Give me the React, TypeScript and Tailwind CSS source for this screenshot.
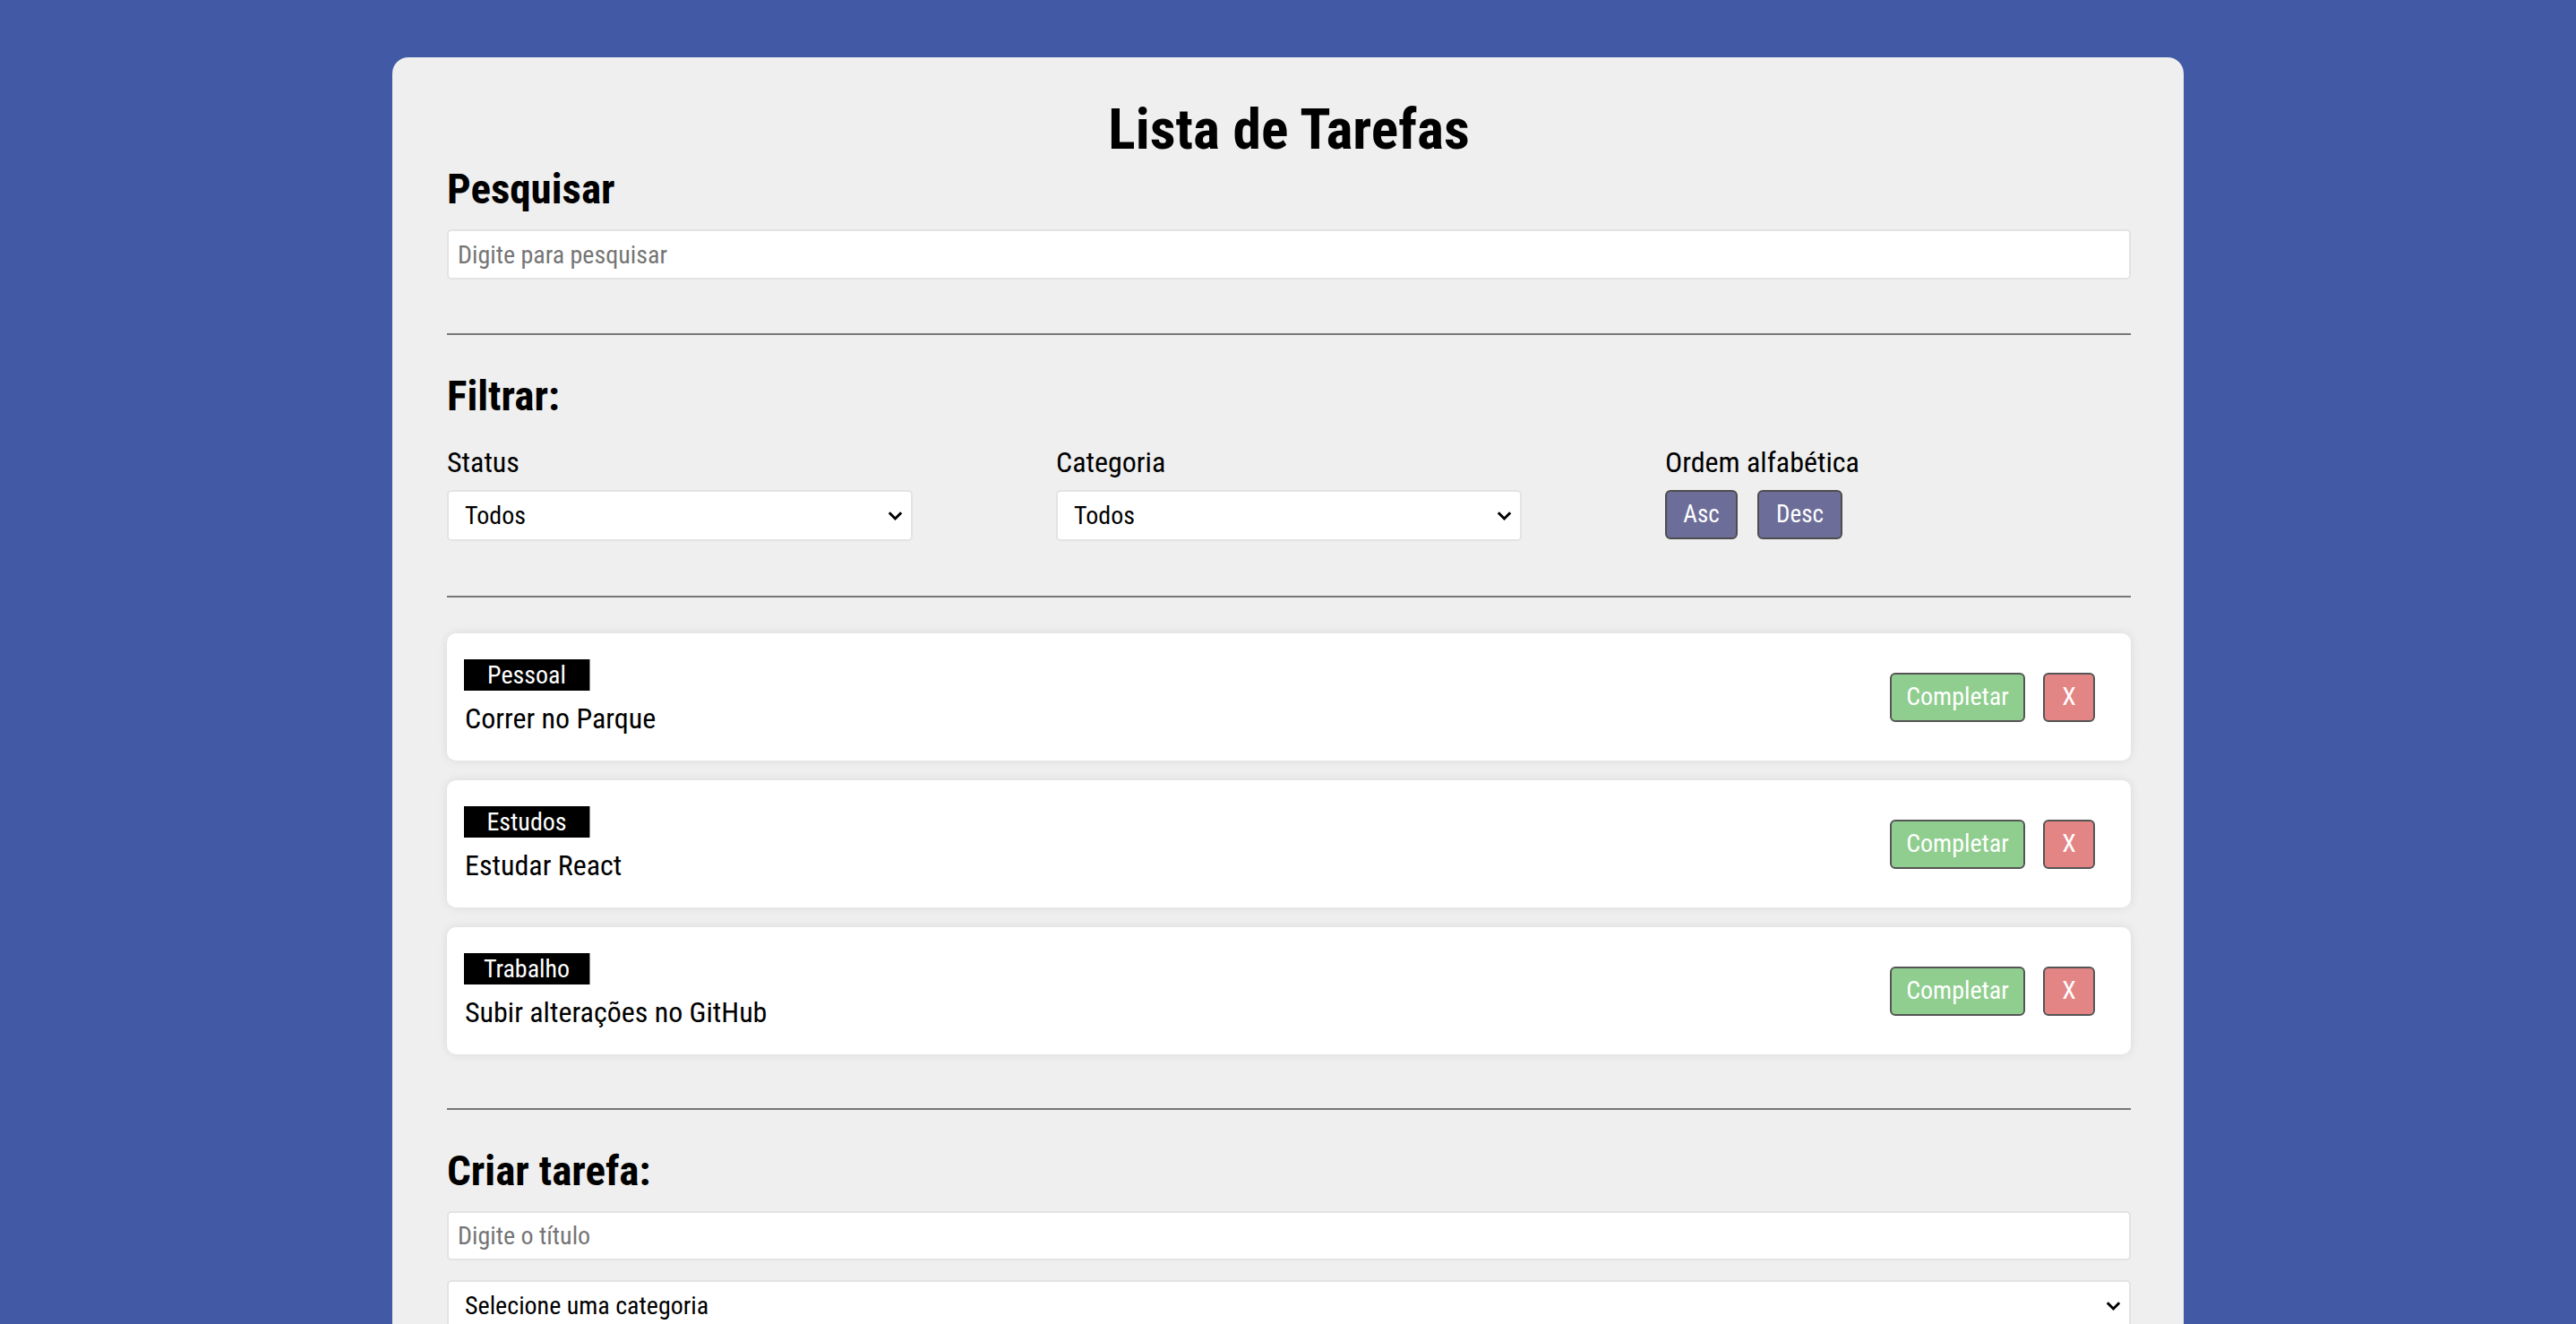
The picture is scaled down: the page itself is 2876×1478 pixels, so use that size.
import React from "react";

const tasks = [
  { cat: "Pessoal", title: "Correr no Parque" },
  { cat: "Estudos", title: "Estudar React" },
  { cat: "Trabalho", title: "Subir alterações no GitHub" },
];

function Chevron() {
  return (
    <svg
      className="pointer-events-none absolute right-[11px] top-1/2 -translate-y-1/2"
      width="17"
      height="11"
      viewBox="0 0 17 11"
      fill="none"
    >
      <path d="M1.8 1.8 L8.5 8.5 L15.2 1.8" stroke="#000" strokeWidth="3" />
    </svg>
  );
}

function Select({ value, className = "" }: { value: string; className?: string }) {
  return (
    <div className={"relative " + className}>
      <select
        defaultValue={value}
        className="h-full w-full appearance-none rounded-[5px] border-2 border-[#e3e3e3] bg-white pl-[18px] text-[28px] text-black outline-none"
      >
        <option>{value}</option>
      </select>
      <Chevron />
    </div>
  );
}

export default function App() {
  return (
    <div className="min-h-screen bg-[#4259a5] pt-[64px] pb-[60px] font-['Roboto_Condensed',Roboto,sans-serif] [font-stretch:condensed] text-black">
      <div className="mx-auto w-[2000px] rounded-[18px] bg-[#efefef] pl-[61px] pr-[59px] pt-[42px] pb-[60px]">
        <h1 className="text-center text-[63.5px] font-bold leading-[77px]">Lista de Tarefas</h1>
        <h2 className="text-[47px] font-bold leading-[56px]">Pesquisar</h2>
        <input
          type="text"
          placeholder="Digite para pesquisar"
          className="mt-[17px] block h-[56px] w-full rounded-[5px] border-2 border-[#e3e3e3] bg-white px-[10px] text-[28px] outline-none placeholder:text-[#757575]"
        />
        <div className="mt-[60px] h-[2px] bg-[#777777]" />

        <h2 className="mt-[40px] text-[47px] font-bold leading-[56px]">Filtrar:</h2>
        <div className="mt-[27px] grid grid-cols-3 gap-x-[160px]">
          <div className="flex flex-col">
            <span className="text-[32px] leading-[38px]">Status</span>
            <Select value="Todos" className="mt-[12px] h-[57px]" />
          </div>
          <div className="flex flex-col">
            <span className="text-[32px] leading-[38px]">Categoria</span>
            <Select value="Todos" className="mt-[12px] h-[57px]" />
          </div>
          <div className="flex flex-col">
            <span className="text-[32px] leading-[38px]">Ordem alfabética</span>
            <div className="mt-[12px] flex gap-[22px]">
              <button className="h-[55px] w-[81px] rounded-[6px] border-2 border-[#4d4d4d] bg-[#6c6e99] text-[27px] text-white">
                Asc
              </button>
              <button className="h-[55px] w-[95px] rounded-[6px] border-2 border-[#4d4d4d] bg-[#6c6e99] text-[27px] text-white">
                Desc
              </button>
            </div>
          </div>
        </div>
        <div className="mt-[61px] h-[2px] bg-[#777777]" />

        <div className="mt-[40px] flex flex-col gap-[22px]">
          {tasks.map((t) => (
            <div
              key={t.title}
              className="flex h-[142px] items-center justify-between rounded-[10px] bg-white pl-[19px] pr-[20px] shadow-[0_0_12px_rgba(0,0,0,0.09)]"
            >
              <div className="flex flex-col">
                <span className="block h-[35px] w-[141px] border-r border-[#8a8a8a] bg-black text-center text-[28px] leading-[35px] text-white">
                  {t.cat}
                </span>
                <span className="mt-[12px] pl-[1px] text-[32px] leading-[38px]">{t.title}</span>
              </div>
              <div className="flex">
                <button className="mr-[20px] h-[55px] w-[151px] rounded-[6px] border-2 border-[#555555] bg-[#8fce8f] text-[28px] text-white">
                  Completar
                </button>
                <button className="mr-[20px] h-[55px] w-[58px] rounded-[6px] border-2 border-[#555555] bg-[#e38585] text-[28px] text-white">
                  X
                </button>
              </div>
            </div>
          ))}
        </div>
        <div className="mt-[60px] h-[2px] bg-[#777777]" />

        <h2 className="mt-[40px] text-[47px] font-bold leading-[56px]">Criar tarefa:</h2>
        <input
          type="text"
          placeholder="Digite o título"
          className="mt-[17px] block h-[55px] w-full rounded-[5px] border-2 border-[#e3e3e3] bg-white px-[10px] text-[28px] outline-none placeholder:text-[#757575]"
        />
        <Select value="Selecione uma categoria" className="mt-[22px] h-[57px]" />
        <button className="mt-[20px] h-[54px] w-[160px] rounded-[6px] border-2 border-[#4d4d4d] bg-[#6c6e99] text-[27px] text-white">
          Adicionar
        </button>
      </div>
    </div>
  );
}
